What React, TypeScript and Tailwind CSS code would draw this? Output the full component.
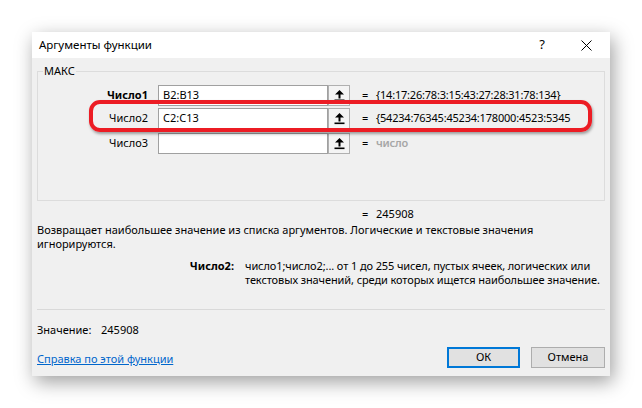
import React from 'react';

const font = { fontFamily: '"Noto Sans", "Open Sans", sans-serif' };

function PickIcon() {
  return (
    <svg width="11" height="13" viewBox="0 0 11 13">
      <path d="M5.5 1 L1 5.5 H4.5 V9.5 H6.5 V5.5 H10 Z" fill="#000" />
      <rect x="0.5" y="10.5" width="10" height="1.6" fill="#000" />
    </svg>
  );
}

interface ArgRowProps {
  label: string;
  bold?: boolean;
  value: string;
  result: string;
  muted?: boolean;
}

function ArgRow({ label, bold, value, result, muted }: ArgRowProps) {
  return (
    <div className="flex items-center h-[21px]">
      <div className={`w-[110px] text-right text-[11px] text-black ${bold ? 'font-bold' : ''}`}>{label}</div>
      <div className="ml-[10px] w-[170px] h-[21px] bg-white border border-[#a0a0a0] flex items-center pl-[4px] text-[11px] text-black">
        {value}
      </div>
      <div className="w-[22px] h-[21px] border border-[#b0b0b0] bg-[#f4f4f4] flex items-center justify-center">
        <PickIcon />
      </div>
      <div className="ml-[12px] w-[14px] text-[11px] text-black">=</div>
      <div className={`text-[11px] tracking-[-0.2px] whitespace-nowrap ${muted ? 'text-[#a6a6a6] font-semibold' : 'text-black'}`}>{result}</div>
    </div>
  );
}

export default function App() {
  return (
    <div className="relative w-[642px] h-[408px] bg-white pt-[32px] pl-[32px]" style={font}>
      <div className="w-[578px] h-[344px] bg-[#f0f0f0] flex flex-col shadow-[3px_6px_18px_rgba(0,0,0,0.38)]">
        {/* title bar */}
        <div className="h-[26px] bg-white flex items-center pl-[7px] pr-[18px]">
          <span className="text-[11.5px] text-black">Аргументы функции</span>
          <span className="ml-auto text-[13px] text-black mr-[36px]">?</span>
          <svg width="11" height="11" viewBox="0 0 11 11">
            <path d="M0.5 0.5 L10.5 10.5 M10.5 0.5 L0.5 10.5" stroke="#000" strokeWidth="1" />
          </svg>
        </div>

        <div className="flex-1 flex flex-col px-[5px] pb-[8px]">
          {/* group box */}
          <div className="relative mt-[13px] h-[130px] border border-[#dcdcdc] pt-[13px] flex flex-col gap-[2px]">
            <span className="absolute -top-[8px] left-[5px] px-[1px] bg-[#f0f0f0] text-[11px] text-black leading-[14px]">МАКС</span>
            <ArgRow label="Число1" bold value="B2:B13" result="{14:17:26:78:3:15:43:27:28:31:78:134}" />
            <ArgRow label="Число2" value="C2:C13" result="{54234:76345:45234:178000:4523:5345" />
            <div className="mt-[2px]">
              <ArgRow label="Число3" value="" result="число" muted />
            </div>
          </div>

          <div className="mt-[5px] flex text-[11px] leading-[15px] text-black">
            <span className="ml-[325px] w-[14px]">=</span>
            <span>245908</span>
          </div>

          <p className="mt-[2px] text-[11px] leading-[14px] text-black pr-[60px]">
            Возвращает наибольшее значение из списка аргументов. Логические и текстовые значения игнорируются.
          </p>

          <div className="mt-[8px] flex text-[11px] leading-[14px] text-black">
            <span className="w-[197px] text-right font-bold">Число2:</span>
            <span className="ml-[11px] flex-1 -mr-[6px] tracking-[-0.1px]">
              число1;число2;... от 1 до 255 чисел, пустых ячеек, логических или текстовых значений, среди которых ищется наибольшее значение.
            </span>
          </div>

          <div className="mt-[22px] h-px bg-[#d9d9d9]" />

          <div className="mt-[12px] flex text-[11px] leading-[15px] text-black">
            <span className="w-[64px]">Значение:</span>
            <span>245908</span>
          </div>

          <div className="mt-auto flex items-end">
            <a className="text-[11px] leading-[15px] text-[#0066cc] underline mb-[2px]">Справка по этой функции</a>
            <button className="ml-auto w-[73px] h-[21px] bg-[#e1e1e1] border-2 border-[#0078d7] text-[11px] text-black">
              ОК
            </button>
            <button className="ml-[11px] w-[74px] h-[21px] bg-[#e1e1e1] border border-[#adadad] text-[11px] text-black">
              Отмена
            </button>
          </div>
        </div>
      </div>

      {/* red highlight annotation */}
      <div className="absolute left-[89px] top-[100px] w-[503px] h-[32px] border-[4px] border-[#ec1c24] rounded-[11px] shadow-[1px_2px_3px_rgba(0,0,0,0.35)]" />
    </div>
  );
}
